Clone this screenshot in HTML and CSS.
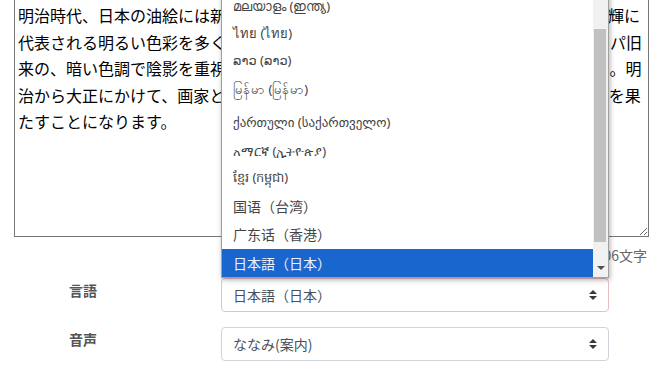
FILE: index.html
```html
<!DOCTYPE html>
<html>
<head>
    <title>読み上げ</title>
    <link rel="stylesheet" href="styles.css">
</head>
<body>
<div class="page">
    <textarea class="source" spellcheck="false">明治時代、日本の油絵には新しい波が訪れます。フランスから帰国した画家黒田清輝に
代表される明るい色彩を多く取り入れた外光派の画風が広まりそれまでのヨーロッパ旧
来の、暗い色調で陰影を重視する画風から明るい画風へ大きく転換していきました。明
治から大正にかけて、画家として多くの若者が渡欧し近代洋画の発展に大きな役割を果
たすことになります。</textarea>
    <div class="counter">206文字</div>

    <div class="form">
        <label class="label">言語</label>
        <div class="field">
            <select class="select invalid">
                <option>日本語（日本）</option>
            </select>
            <svg class="arrows" width="10" height="12" viewBox="0 0 10 12"><path d="M1 5 L5 1 L9 5 Z M1 7 L5 11 L9 7 Z" fill="#343a40"/></svg>
        </div>

        <label class="label">音声</label>
        <div class="field">
            <select class="select">
                <option>ななみ(案内)</option>
            </select>
            <svg class="arrows" width="10" height="12" viewBox="0 0 10 12"><path d="M1 5 L5 1 L9 5 Z M1 7 L5 11 L9 7 Z" fill="#343a40"/></svg>
        </div>
    </div>

    <div class="popup">
        <ol class="options">
            <li class="opt first">മലയാളം (ഇന്ത്യ)</li>
            <li class="opt">ไทย (ไทย)</li>
            <li class="opt">ລາວ (ລາວ)</li>
            <li class="opt tall">မြန်မာ (မြန်မာ)</li>
            <li class="opt tall">ქართული (საქართველო)</li>
            <li class="opt">አማርኛ (ኢትዮጵያ)</li>
            <li class="opt">ខ្មែរ (កម្ពុជា)</li>
            <li class="opt cjk">国语（台湾）</li>
            <li class="opt cjk">广东话（香港）</li>
            <li class="opt cjk selected">日本語（日本）</li>
        </ol>
        <div class="scrollbar">
            <div class="thumb"></div>
            <div class="down"></div>
        </div>
    </div>
</div>
</body>
</html>
```

FILE: styles.css
```css
html, body {
    margin: 0px;
    padding: 0px;
    background-color: #FFF;
    overflow: hidden;
}

body {
    font-family: "Noto Sans CJK JP", "Noto Sans", "DejaVu Sans", sans-serif;
    color: #333;
}

.page {
    position: relative;
    padding: 0px 14px;
}

.source {
    display: block;
    box-sizing: border-box;
    width: 635px;
    height: 238px;
    margin: -1px 0px 0px 0px;
    padding: 2px 3px;
    border: 1px solid #767676;
    font-family: "Noto Sans CJK JP", sans-serif;
    font-size: 16px;
    line-height: 26.5px;
    color: #000;
    white-space: pre;
    overflow: hidden;
    resize: both;
}

.counter {
    width: 633px;
    margin-top: 8px;
    text-align: right;
    font-size: 14px;
    line-height: 20px;
    color: #666;
}

.form {
    display: grid;
    grid-template-columns: 207px 388px;
    row-gap: 15px;
    margin-top: 13px;
}

.label {
    padding: 2px 0px 0px 55px;
    font-size: 14px;
    line-height: 20px;
    font-weight: bold;
    color: #555;
}

.field {
    position: relative;
}

.select {
    display: block;
    box-sizing: border-box;
    width: 388px;
    height: 34px;
    padding: 0px 30px 0px 11px;
    border: 1px solid #ced4da;
    border-radius: 4px;
    background-color: #FFF;
    font-family: "Noto Sans CJK JP", sans-serif;
    font-size: 14px;
    color: #495057;
    appearance: none;
    -webkit-appearance: none;
}

.select.invalid {
    border-color: #e6bfc3;
}

.arrows {
    position: absolute;
    right: 11px;
    top: 11px;
}

/* open dropdown list of the language select */
.popup {
    position: absolute;
    left: 221px;
    top: -8px;
    width: 388px;
    box-sizing: border-box;
    display: flex;
    border: 1px solid #a0a0a0;
    background-color: #FFF;
    box-shadow: 1px 2px 5px rgba(0, 0, 0, 0.3);
    z-index: 5;
}

.options {
    flex: 1;
    margin: 0px;
    padding: 0px;
    list-style-type: none;
}

.opt {
    display: flex;
    align-items: center;
    height: 27px;
    padding-left: 11px;
    font-family: "Noto Sans", "DejaVu Sans", "Noto Sans CJK JP", sans-serif;
    font-size: 13px;
    color: #444;
    white-space: nowrap;
    overflow: hidden;
}

.opt.first {
    height: 27.5px;
}

.opt.tall {
    height: 32px;
}

.opt.cjk {
    height: 28.5px;
    font-family: "Noto Sans CJK JP", sans-serif;
    font-size: 14px;
}

.opt.selected {
    background-color: #1a66cf;
    color: #EAF2FF;
}

.scrollbar {
    width: 15px;
    display: flex;
    flex-direction: column;
    background-color: #f1f1f1;
}

.thumb {
    width: 12px;
    height: 213px;
    margin: 37px 0px 0px 1px;
    background-color: #c1c1c1;
}

.down {
    width: 0px;
    height: 0px;
    margin: auto 0px 7px 4px;
    border-left: 4px solid transparent;
    border-right: 4px solid transparent;
    border-top: 4px solid #505050;
}
```
